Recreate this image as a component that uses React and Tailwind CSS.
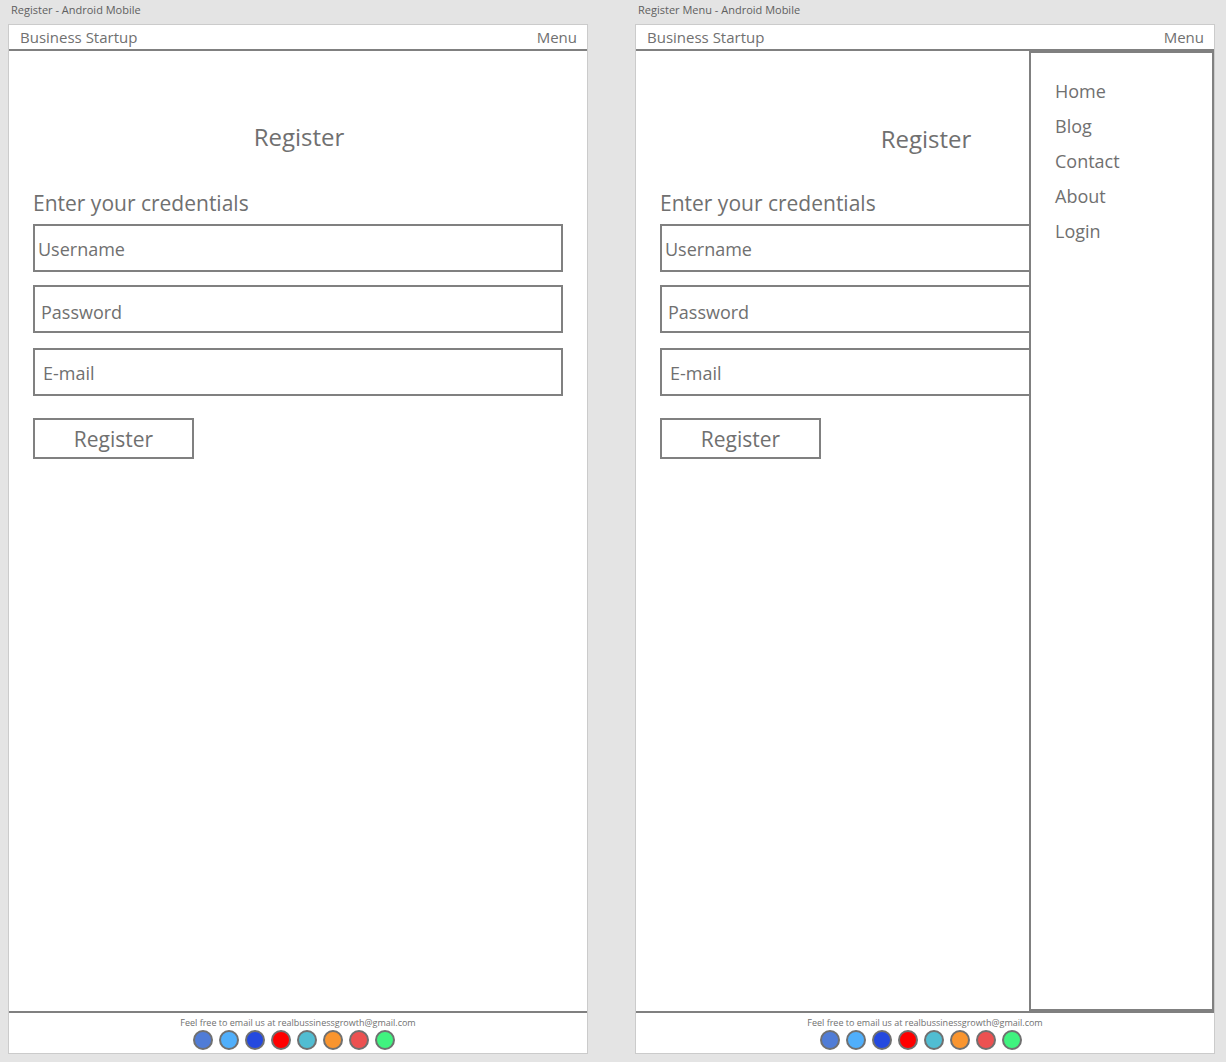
import React from "react";

const fields = [
  { name: "username", label: "Username", type: "text", pad: "pl-[3px] pt-0.5" },
  { name: "password", label: "Password", type: "password", pad: "pl-1.5 pt-1.5", gap: "mt-[13px]" },
  { name: "email", label: "E-mail", type: "email", pad: "pl-2 pt-0.5", gap: "mt-[15px]" },
];

const socials = [
  { label: "Facebook", color: "bg-[#507cd6]" },
  { label: "Twitter", color: "bg-[#50affb]" },
  { label: "LinkedIn", color: "bg-[#2449df]" },
  { label: "YouTube", color: "bg-[#ff0000]" },
  { label: "Vimeo", color: "bg-[#51bdd2]" },
  { label: "Blogger", color: "bg-[#f9952f]" },
  { label: "Google", color: "bg-[#ec5151]" },
  { label: "WhatsApp", color: "bg-[#40f37f]" },
];

const links = ["Home", "Blog", "Contact", "About", "Login"];

function Artboard({ title, id, menuOpen, titleSpace }) {
  return (
    <section className="flex min-w-0 flex-1 flex-col">
      <h2 className="h-6 pl-[3px] pt-0.5 text-[11px] leading-4 text-[#606060]">{title}</h2>
      <div className="flex flex-1 flex-col border border-[#cbcbcb] bg-white">
        <header className="flex h-[26px] items-center justify-between border-b-2 border-[#808080] pl-[11px] pr-2.5 text-[15px] leading-6">
          <a href="#home">Business Startup</a>
          <button type="button" aria-expanded={menuOpen}>Menu</button>
        </header>
        <main className="relative flex-1 px-6">
          <h1 className={`pl-0.5 text-center text-2xl leading-8 ${titleSpace}`}>Register</h1>
          <form>
            <p className="text-[21px] leading-8">Enter your credentials</p>
            <div className="mt-[5px] flex flex-col">
              {fields.map((f) => (
                <input
                  key={f.name}
                  id={`${id}-${f.name}`}
                  name={f.name}
                  type={f.type}
                  aria-label={f.label}
                  placeholder={f.label}
                  className={`h-12 w-full border-2 border-[#808080] text-lg placeholder:text-[#707070] ${f.pad} ${f.gap || ""}`}
                />
              ))}
            </div>
            <button type="button" className="mt-[22px] h-[41px] w-[161px] border-2 border-[#808080] text-[21px] leading-8">
              Register
            </button>
          </form>
          {menuOpen && (
            <nav className="absolute inset-y-0 right-0 w-[185px] border-2 border-[#808080] bg-white pl-6 pt-5">
              <ul className="text-lg leading-9">
                {links.map((l) => (
                  <li key={l} className="h-[35px]">
                    <a href={`#${l.toLowerCase()}`}>{l}</a>
                  </li>
                ))}
              </ul>
            </nav>
          )}
        </main>
        <footer className="h-[42px] border-t-2 border-[#808080] pt-0.5">
          <p className="text-center text-[9px] leading-[15px]">Feel free to email us at realbussinessgrowth@gmail.com</p>
          <div className="flex justify-center gap-1.5 pr-2">
            {socials.map((s) => (
              <a key={s.label} href={`#${s.label.toLowerCase()}`} aria-label={s.label} className={`size-5 rounded-full border-2 border-[#707070] ${s.color}`} />
            ))}
          </div>
        </footer>
      </div>
    </section>
  );
}

export default function App() {
  return (
    <div className="flex min-h-screen gap-[47px] bg-[#e4e4e4] pb-2 pl-2 pr-[11px] font-['Open_Sans',sans-serif] text-[#707070]">
      <Artboard id="register" title="Register - Android Mobile" menuOpen={false} titleSpace="mt-[70px] mb-[34px]" />
      <Artboard id="register-menu" title="Register Menu - Android Mobile" menuOpen titleSpace="mt-[72px] mb-8" />
    </div>
  );
}
